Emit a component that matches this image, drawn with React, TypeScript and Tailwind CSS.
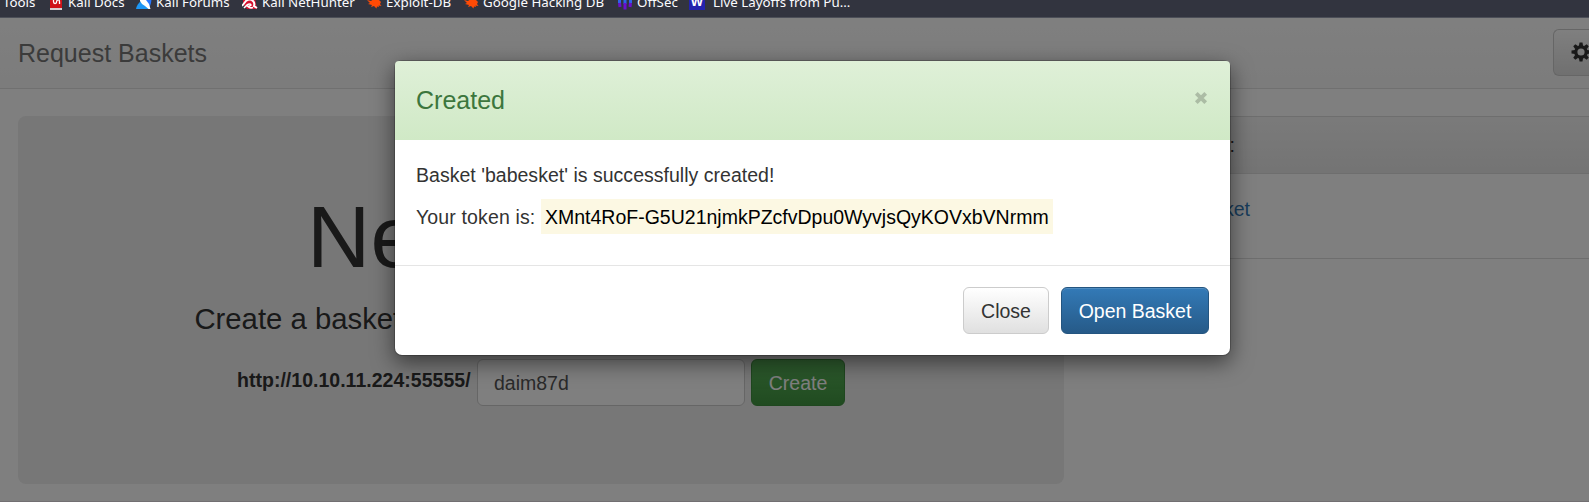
import React from "react";

const ui = "font-['Liberation_Sans',Arial,sans-serif]";

function Bookmark({ icon, label, width }: { icon?: React.ReactNode; label: string; width: string }) {
  return (
    <div className={`flex shrink-0 items-center ${width}`}>
      {icon}
      <span className="whitespace-pre">{label}</span>
    </div>
  );
}

function DocsIcon() {
  return (
    <svg width="12" height="16" viewBox="0 0 12 16" className="mr-[6px] shrink-0">
      <rect width="12" height="15" fill="#d01318" />
      <rect y="14" width="12" height="2" fill="#d9cfd0" />
      <path d="M3.500 5v2.500q0 2 1.500 2T6.500 8t1.500-2 1.500 2v2" fill="none" stroke="#fff" strokeWidth="1.300" />
    </svg>
  );
}

function ForumsIcon() {
  return (
    <svg width="16" height="16" viewBox="0 0 16 16" className="mr-[4px] shrink-0">
      <path d="M4 0h11q1 3 0 9l-2 6L5 9z" fill="#2777ff" />
      <path d="M0 15q1-5 5-8l8 8z" fill="#1d96f5" />
      <path d="M4 3l6 3 3 4 1.500 5h-2L9 12 6 10 4 7z" fill="#fff" />
    </svg>
  );
}

function HunterIcon() {
  return (
    <svg width="16" height="16" viewBox="0 0 16 16" className="mr-[4px] shrink-0">
      <path d="M1 4h12l1 6 1 5H5L1 10z" fill="#d5112f" />
      <path d="M0 12l4-5q4-3 7 0 2 2 1 5l3 2" fill="none" stroke="#fff" strokeWidth="2" />
      <path d="M2 14l3-3q3-2 4 0-1 1-3 1.500 2 2 5 1" fill="none" stroke="#fff" strokeWidth="1.600" />
    </svg>
  );
}

function BugIcon() {
  return (
    <svg width="16" height="16" viewBox="0 0 16 16" className="mr-[3px] shrink-0">
      <path d="M0 6l4 1 5-4 3 3 2 2-1 2 1.500 2-3-.5.500 1.500-2-.5-.5 2-2.500-2.500-3 1 1-2-4-1 2-1z" fill="#ff4a05" />
    </svg>
  );
}

function OffsecIcon() {
  return (
    <svg width="16" height="16" viewBox="0 0 16 16" className="mr-[4px] shrink-0">
      <g strokeWidth="3">
        <path d="M2.500 2v7M8 2v8M13.500 2v7" stroke="#2d62e8" />
        <path d="M2.500 9l.5 4M8 9v6.500M13.500 9l-.5 4" stroke="#6a10cf" />
      </g>
    </svg>
  );
}

function LayoffIcon() {
  return (
    <div className="mr-[8px] flex h-4 w-4 shrink-0 items-center justify-center bg-[#2323ad] font-['Liberation_Sans',sans-serif] text-[13px] leading-[16px] font-black text-white">
      W
    </div>
  );
}

function Cog() {
  const teeth = [0, 45, 90, 135, 180, 225, 270, 315];
  return (
    <svg width="20" height="20" viewBox="-10 -10 20 20" className="shrink-0">
      <circle r="5.200" fill="none" stroke="#333" strokeWidth="3.200" />
      {teeth.map((a) => (
        <path key={a} d="M-2.100 -6L-1.500 -9.500H1.500L2.100 -6z" fill="#333" transform={`rotate(${a})`} />
      ))}
    </svg>
  );
}

export default function App() {
  return (
    <div className={`relative flex h-[502px] w-[1589px] flex-col overflow-hidden bg-white text-[19.5px] leading-[28px] text-[#333] ${ui}`}>
      <div className="h-[18px] shrink-0 overflow-hidden border-b border-[#4c4f58] bg-[#32343f]">
        <div className="-mt-[7px] flex h-[18px] items-center pl-[3px] font-['Noto_Sans',sans-serif] text-[13.33px] leading-[18px] text-[#fbfbfe]">
          <Bookmark label="Tools" width="w-[47px]" />
          <Bookmark icon={<DocsIcon />} label="Kali Docs" width="w-[86px]" />
          <Bookmark icon={<ForumsIcon />} label="Kali Forums" width="w-[106px]" />
          <Bookmark icon={<HunterIcon />} label="Kali NetHunter" width="w-[125px]" />
          <Bookmark icon={<BugIcon />} label="Exploit-DB" width="w-[97px]" />
          <Bookmark icon={<BugIcon />} label="Google Hacking DB" width="w-[153px]" />
          <Bookmark icon={<OffsecIcon />} label="OffSec" width="w-[72px]" />
          <Bookmark icon={<LayoffIcon />} label="Live Layoffs from Pu…" width="w-[180px]" />
        </div>
      </div>

      <div className="relative flex h-[484px] shrink-0 flex-col">
        <nav className="flex h-[71px] shrink-0 justify-between border-b border-[#e0e0e0] bg-linear-to-b from-white to-[#f8f8f8] pl-[18px]">
          <span className="pt-[21px] text-[25px] leading-[28px] text-[#777]">Request Baskets</span>
          <div className="mt-[11px] flex h-[47px] w-[36px] items-center overflow-hidden rounded-l-[6px] border border-r-0 border-[#ccc] bg-linear-to-b from-white to-[#e0e0e0] pb-[2px] pl-[17px]">
            <Cog />
          </div>
        </nav>

        <div className="flex flex-1 pt-[27px] pl-[18px]">
          <main className="flex h-[368px] w-[1046px] shrink-0 flex-col items-center rounded-[8px] bg-[#eee]">
            <h1 className="mt-[73px] text-[87.7px] leading-[97px]">New Basket</h1>
            <p className="mt-[12px] text-[29.3px] leading-[41px] whitespace-nowrap">
              Create a basket to collect and inspect HTTP requests
            </p>
            <div className="mt-[20px] flex w-[610px] items-start">
              <label className="w-[241px] pt-[7px] pl-px font-bold tracking-[0.02px]">http://10.10.11.224:55555/</label>
              <div className="h-[47px] w-[268px] rounded-[6px] border border-[#ccc] bg-white pt-[9px] pl-[16px] text-[#555]">daim87d</div>
              <button className="ml-[6px] h-[47px] w-[94px] rounded-[6px] border border-[#3e8f3e] bg-linear-to-b from-[#5cb85c] to-[#419641] text-white">
                Create
              </button>
            </div>
          </main>

          <aside className="ml-[42px] h-[143px] w-[500px] shrink-0 border border-[#ddd]">
            <div className="flex h-[57px] items-center border-b border-[#ddd] bg-linear-to-b from-[#f5f5f5] to-[#e8e8e8] pl-[20px]">
              <span className="w-[108px] text-right">My Baskets:</span>
            </div>
            <div className="w-[143px] pt-[21px] text-right text-[#337ab7]">babesket</div>
          </aside>
        </div>

        <div className="h-px shrink-0 bg-[#e4dfe4]" />
        <div className="absolute inset-0 bg-black/50" />
      </div>

      <section className="absolute top-[60px] left-[394px] flex h-[296px] w-[837px] flex-col rounded-[8px] border border-black/20 bg-white bg-clip-padding shadow-[0_7px_21px_rgba(0,0,0,0.5)]">
        <header className="flex h-[79px] shrink-0 justify-between rounded-t-[4px] bg-linear-to-b from-[#dff0d8] to-[#d0e9c6] px-[21px]">
          <h4 className="pt-[25px] text-[25px] leading-[28px] text-[#3c763d]">Created</h4>
          <svg width="14" height="14" viewBox="0 0 14 14" className="mt-[30px] mr-px opacity-20">
            <path d="M2.300 2.300L11.700 11.700M11.700 2.300L2.300 11.700" stroke="#000" strokeWidth="3.800" />
          </svg>
        </header>
        <div className="h-[125px] px-[21px] pt-[21px]">
          <p className="tracking-[0.02px]">Basket 'babesket' is successfully created!</p>
          <p className="mt-[14px] flex whitespace-pre">
            <span className="w-[125px] shrink-0 tracking-[0.14px]">Your token is:</span>
            <mark className="-mt-[4px] h-[35px] w-[512px] bg-[#fcf8e3] pt-[4px] pl-[4px] text-black">
              XMnt4RoF-G5U21njmkPZcfvDpu0WyvjsQyKOVxbVNrmm
            </mark>
          </p>
        </div>
        <footer className="flex flex-1 justify-end gap-[12px] border-t border-[#e5e5e5] pt-[21px] pr-[21px]">
          <button className="h-[47px] w-[86px] rounded-[6px] border border-[#ccc] bg-linear-to-b from-white to-[#e0e0e0]">Close</button>
          <button className="h-[47px] w-[148px] rounded-[6px] border border-[#245580] bg-linear-to-b from-[#337ab7] to-[#265a88] text-white shadow-[inset_0_1px_0_rgba(255,255,255,0.15)]">
            Open Basket
          </button>
        </footer>
      </section>
    </div>
  );
}
